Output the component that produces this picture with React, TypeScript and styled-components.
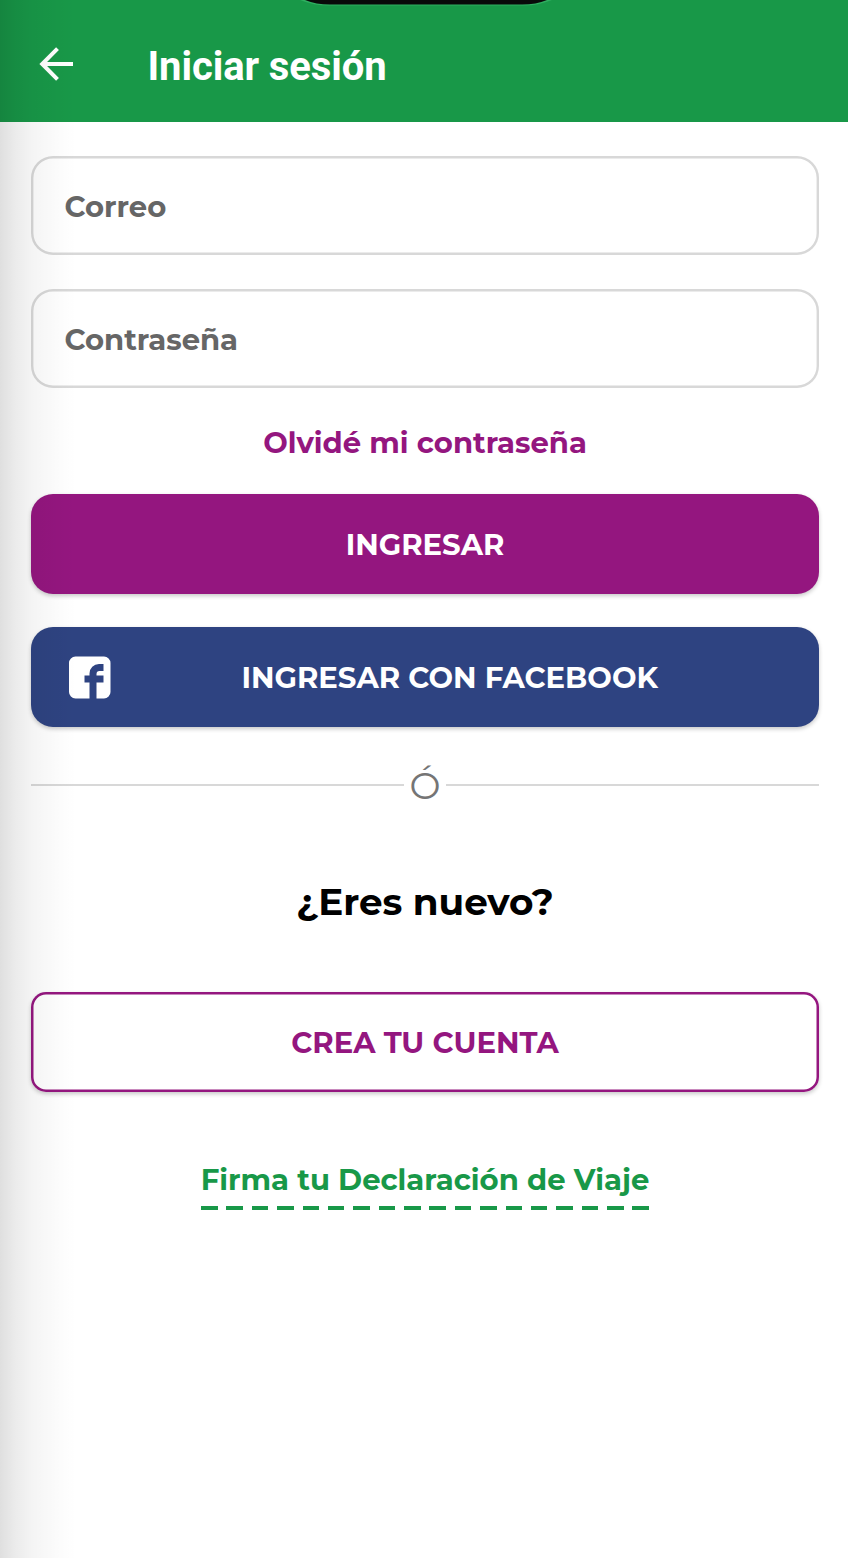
import React from 'react';
import styled, { createGlobalStyle } from 'styled-components';

const colors = {
  green: '#189848',
  purple: '#94167f',
  blue: '#2e4381',
  line: '#d8d8d8',
  hint: '#666666',
};

const GlobalStyle = createGlobalStyle`
  *, *::before, *::after { box-sizing: border-box; }
  html, body { margin: 0; background: #fff; }
  body { font-family: Montserrat, Inter, "Open Sans", sans-serif; }
  button, input { font: inherit; }
`;

const Screen = styled.div`
  position: relative;
  display: flex;
  flex-direction: column;
  width: 848px;
  height: 1558px;
  overflow: hidden;
  background: #fff;
`;

const EdgeShadow = styled.div`
  position: absolute;
  inset: 0 auto 0 0;
  width: 76px;
  pointer-events: none;
  background: linear-gradient(
    90deg,
    rgba(0, 0, 0, 0.125) 0%,
    rgba(0, 0, 0, 0.08) 20%,
    rgba(0, 0, 0, 0.045) 42%,
    rgba(0, 0, 0, 0.015) 75%,
    rgba(0, 0, 0, 0) 100%
  );
`;

const Notch = styled.svg`
  position: absolute;
  top: 0;
  left: 300px;
  width: 252px;
  height: 8px;
`;

const AppBar = styled.header`
  display: flex;
  align-items: center;
  flex: none;
  height: 122px;
  padding: 7px 0 0 39px;
  background: ${colors.green};
`;

const BackButton = styled.button`
  display: flex;
  width: 35px;
  height: 34px;
  margin-bottom: 1px;
  padding: 0;
  border: 0;
  background: none;
`;

const Title = styled.h1`
  margin: 5px 0 0 73.5px;
  font: 700 40px/48px Roboto, sans-serif;
  letter-spacing: -0.1px;
  color: #fff;
`;

const Form = styled.main`
  display: flex;
  flex-direction: column;
  padding: 33.5px 29px 0 31px;
`;

const Field = styled.input`
  height: 99.5px;
  margin-bottom: 33.5px;
  padding: 2px 33.5px 0;
  border: 0;
  border-radius: 22px;
  outline: 0;
  box-shadow: inset 0 0 0 2.4px ${colors.line};
  background: transparent;
  font-size: 29.1px;
  font-weight: 700;
  color: ${colors.hint};
  &::placeholder { color: ${colors.hint}; opacity: 1; }
`;

const Label = styled.span`
  white-space: nowrap;
`;

const ForgotLink = styled.a`
  align-self: center;
  height: 40px;
  padding-top: 1px;
  font-size: 29.1px;
  font-weight: 700;
  line-height: 40px;
  color: ${colors.purple};
`;

const Button = styled.button<{ $tone: 'purple' | 'blue' | 'outline' }>`
  display: flex;
  align-items: center;
  justify-content: center;
  height: 100px;
  padding: 2px 0 0;
  border: 0;
  border-radius: ${(p) => (p.$tone === 'outline' ? 15 : 22)}px;
  background: ${(p) => (p.$tone === 'outline' ? '#fff' : colors[p.$tone])};
  box-shadow:
    ${(p) => (p.$tone === 'outline' ? `inset 0 0 0 2.5px ${colors.purple},` : '')}
    0 2px 4px rgba(0, 0, 0, 0.22);
  font-size: 29.1px;
  font-weight: 700;
  color: ${(p) => (p.$tone === 'outline' ? colors.purple : '#fff')};
`;

const SubmitButton = styled(Button)`
  margin: 32px 0 33px;
`;

const FacebookButton = styled(Button)`
  padding: 1px 0 0 36.5px;
  justify-content: flex-start;
`;

const FacebookLabel = styled.span`
  display: flex;
  flex: 1;
  justify-content: center;
  padding: 1px 30px 0 0;
`;

const Divider = styled.div`
  display: flex;
  align-items: center;
  height: 48px;
  margin-top: 34px;
  gap: 7px;
`;

const Rule = styled.span`
  flex: 1;
  height: 2px;
  background: ${colors.line};
`;

const Or = styled.span`
  display: flex;
  justify-content: center;
  width: 28px;
  padding-top: 2px;
  font-size: 37px;
  font-weight: 400;
  line-height: 48px;
  color: #757575;
`;

const Question = styled.h2`
  align-self: center;
  margin: 68px 0 0;
  font-size: 37.3px;
  font-weight: 700;
  line-height: 50px;
  color: #000;
`;

const CreateButton = styled(Button)`
  margin-top: 65px;
`;

const Declaration = styled.a`
  display: flex;
  flex-direction: column;
  align-items: center;
  align-self: center;
  width: 448px;
  margin-top: 68px;
  font-size: 29.1px;
  font-weight: 700;
  line-height: 40px;
  color: ${colors.green};
`;

const Dashes = styled.span`
  width: 100%;
  height: 4px;
  margin-top: 6px;
  background: repeating-linear-gradient(90deg, ${colors.green} 0 16.5px, transparent 16.5px 25.38px);
`;

export default function App() {
  return (
    <Screen>
      <GlobalStyle />
      <AppBar>
        <BackButton aria-label="Volver">
          <svg width="35" height="34" viewBox="0 0 35 34" fill="none" stroke="#fff" strokeWidth="4">
            <path d="M34 17H4M18.5 1.7 3.2 17l15.3 15.3" />
          </svg>
        </BackButton>
        <Title>Iniciar sesión</Title>
      </AppBar>
      <Form>
        <Field placeholder="Correo" />
        <Field placeholder="Contraseña" />
        <ForgotLink><Label>Olvidé mi contraseña</Label></ForgotLink>
        <SubmitButton $tone="purple"><Label>INGRESAR</Label></SubmitButton>
        <FacebookButton $tone="blue">
          <svg width="43" height="43" viewBox="0 0 43 43">
            <path
              fill="#fff"
              d="M7.500 .5h28.500a6.500 6.500 0 0 1 6.500 6.500v29a6.500 6.500 0 0 1-6.500 6.500h-7.500V26.500H35.500v-7h-7v-1.500a3 3 0 0 1 3-3H35.500V8h-4.500a9.500 9.500 0 0 0-9.500 9.500v2h-5v7h5v16H7.500a6.500 6.500 0 0 1-6.500-6.500V7a6.500 6.500 0 0 1 6.500-6.500Z"
            />
          </svg>
          <FacebookLabel><Label>INGRESAR CON FACEBOOK</Label></FacebookLabel>
        </FacebookButton>
        <Divider>
          <Rule />
          <Or>Ó</Or>
          <Rule />
        </Divider>
        <Question><Label>¿Eres nuevo?</Label></Question>
        <CreateButton $tone="outline"><Label>CREA TU CUENTA</Label></CreateButton>
        <Declaration>
          <Label>Firma tu Declaración de Viaje</Label>
          <Dashes />
        </Declaration>
      </Form>
      <Notch viewBox="0 0 252 8">
        <path d="M0 0H252Q238 5.500 224 5.500H28Q14 5.500 0 0Z" fill="#2fae60" />
        <path d="M5 0H247Q236 4.500 222 4.500H30Q16 4.500 5 0Z" fill="#080a09" />
      </Notch>
      <EdgeShadow />
    </Screen>
  );
}
